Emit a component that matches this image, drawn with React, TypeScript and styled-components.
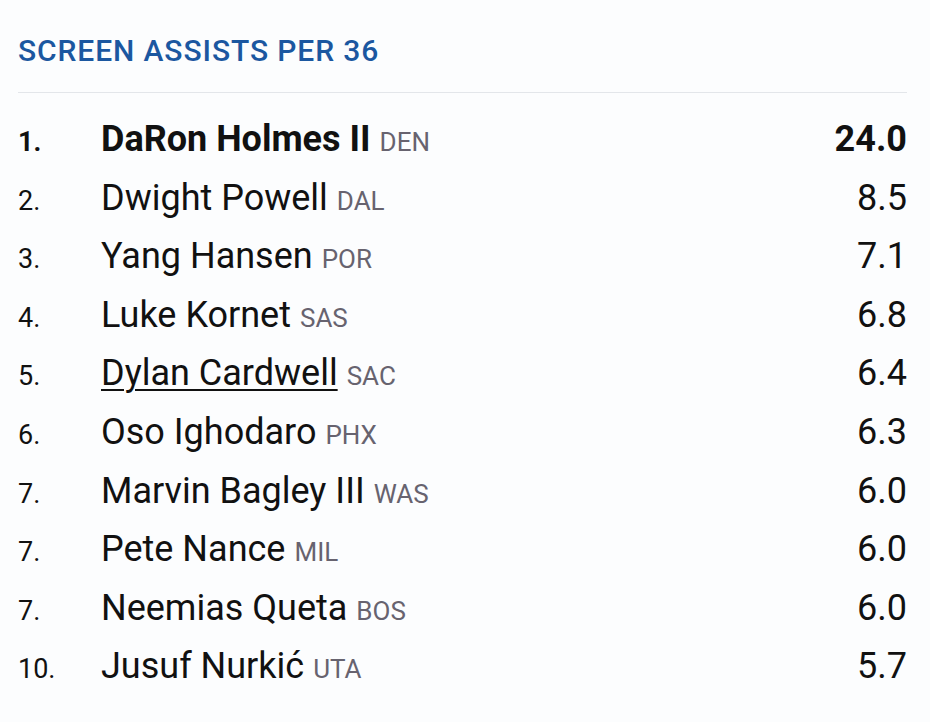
import React from 'react'
import styled, { createGlobalStyle } from 'styled-components'

const GlobalStyle = createGlobalStyle`
  html, body {
    margin: 0;
    padding: 0;
    background: #fcfdfe;
  }
  body {
    font-family: Roboto, "Liberation Sans", sans-serif;
    color: #111;
  }
`

const leaders = [
  { rank: '1.', name: 'DaRon Holmes II', team: 'DEN', value: '24.0' },
  { rank: '2.', name: 'Dwight Powell', team: 'DAL', value: '8.5' },
  { rank: '3.', name: 'Yang Hansen', team: 'POR', value: '7.1' },
  { rank: '4.', name: 'Luke Kornet', team: 'SAS', value: '6.8' },
  { rank: '5.', name: 'Dylan Cardwell', team: 'SAC', value: '6.4', link: true },
  { rank: '6.', name: 'Oso Ighodaro', team: 'PHX', value: '6.3' },
  { rank: '7.', name: 'Marvin Bagley III', team: 'WAS', value: '6.0' },
  { rank: '7.', name: 'Pete Nance', team: 'MIL', value: '6.0' },
  { rank: '7.', name: 'Neemias Queta', team: 'BOS', value: '6.0' },
  { rank: '10.', name: 'Jusuf Nurkić', team: 'UTA', value: '5.7' },
]

const App = () => {
  return (
    <Panel>
      <GlobalStyle />
      <Title>SCREEN ASSISTS PER 36</Title>
      <List>
        {leaders.map((p, i) => (
          <Row key={i}>
            <Rank leader={i === 0}>{p.rank}</Rank>
            <Player>
              <Name leader={i === 0} link={p.link}>
                {p.name}
              </Name>
              <Team>{p.team}</Team>
            </Player>
            <Value leader={i === 0}>{p.value}</Value>
          </Row>
        ))}
      </List>
    </Panel>
  )
}

const Panel = styled.div`
  width: 930px;
  height: 722px;
  box-sizing: border-box;
  padding: 33px 23px 0 18px;
  background: #fcfdfe;
`

const Title = styled.h2`
  margin: 0;
  padding-bottom: 23px;
  font-size: 30px;
  font-weight: 500;
  line-height: 36px;
  letter-spacing: 0.9px;
  color: #1b57a0;
  border-bottom: 1px solid #e3e6ea;
`

const List = styled.div`
  display: flex;
  flex-direction: column;
  padding-top: 28px;
`

const Row = styled.div`
  display: grid;
  grid-template-columns: 83px 1fr auto;
  align-items: baseline;
  height: 58.6px;
  line-height: 1;
`

const Rank = styled.span<{ leader?: boolean }>`
  font-size: 27px;
  font-weight: ${({ leader }) => (leader ? 700 : 400)};
  color: #111;
`

const Player = styled.span`
  display: flex;
  align-items: baseline;
  gap: 9px;
  white-space: nowrap;
`

const Name = styled.span<{ leader?: boolean; link?: boolean }>`
  font-size: 36px;
  font-weight: ${({ leader }) => (leader ? 700 : 400)};
  color: #111;
  text-decoration: ${({ link }) => (link ? 'underline' : 'none')};
  text-decoration-thickness: 2px;
  text-underline-offset: 4px;
`

const Team = styled.span`
  font-size: 26px;
  font-weight: 400;
  color: #67636f;
`

const Value = styled.span<{ leader?: boolean }>`
  font-size: 36px;
  font-weight: ${({ leader }) => (leader ? 700 : 400)};
  color: #111;
  text-align: right;
`

export default App
